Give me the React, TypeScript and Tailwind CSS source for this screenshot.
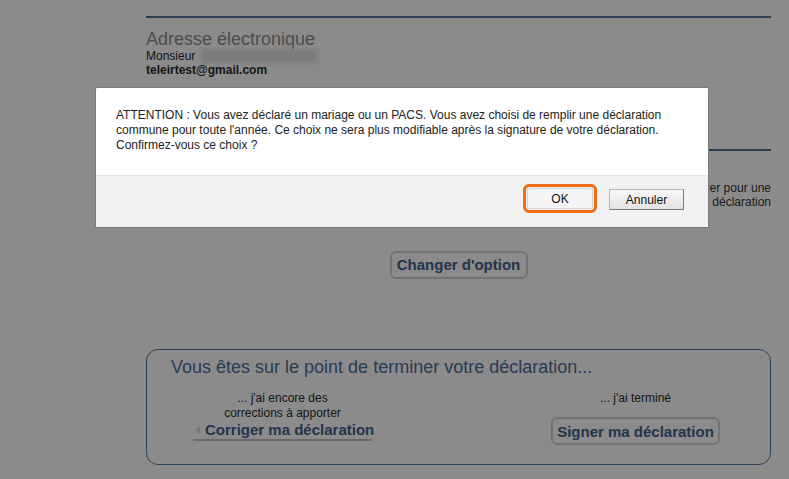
import * as React from "react";

export default function App() {
    return (
        <div className="relative min-h-[479px] overflow-hidden bg-white font-['Liberation_Sans',Arial,sans-serif] text-[#333]">
            <div className="ml-[146px] w-[625px] pt-[16px]">
                {/* Coordonnées */}
                <div className="h-[2px] bg-[#52779f]" />
                <h3 className="mt-[11px] text-[18px] leading-[20px] text-[#8e8e8e]">Adresse électronique</h3>
                <div className="flex items-center text-[12px] leading-[14px] text-[#2a2a2a]">
                    <span>Monsieur</span>
                    <span className="ml-[6px] h-[14px] w-[116px] bg-[#e2e2e2] blur-[2px]" />
                </div>
                <div className="text-[12px] font-bold leading-[14px] text-[#2a2a2a]">teleirtest@gmail.com</div>

                {/* Option de déclaration (sous la boîte de dialogue) */}
                <h3 className="mt-[46px] text-[18px] leading-[20px] text-[#8e8e8e]">Type de déclaration</h3>
                <div className="mt-[6px] h-[2px] bg-[#52779f]" />
                <p className="mt-[30px] text-right text-[12px] leading-[14px] text-[#333]">
                    Vous avez choisi une déclaration commune. Vous pouvez changer d'option et choisir de déclarer pour une
                    <br />
                    déclaration séparée jusqu'à la signature de votre déclaration
                </p>
                <div className="mt-[42px] flex justify-center">
                    <button className="h-[28px] w-[138px] rounded-[6px] border-2 border-[#d2d2d2] bg-white text-[15px] font-bold whitespace-nowrap text-[#41618a]">
                        Changer d'option
                    </button>
                </div>

                {/* Fin de déclaration */}
                <div className="mt-[70px] rounded-[12px] border border-[#52779f] pt-[7px] pb-[19px]">
                    <h2 className="pl-[24px] text-[18px] leading-[20px] text-[#4c6f98]">
                        Vous êtes sur le point de terminer votre déclaration...
                    </h2>
                    <div className="mt-[14px] flex justify-between pl-[46px] pr-[50px]">
                        <div className="flex w-[179px] flex-col items-center text-center text-[12px] leading-[15px] text-[#2a2a2a]">
                            <span>... j'ai encore des</span>
                            <span>corrections à apporter</span>
                            <a className="flex h-[20px] w-[179px] items-center gap-[5px] border-b-2 border-[#c3c3c3] pl-[2px] text-[15px] leading-[18px] font-bold whitespace-nowrap text-[#41618a]">
                                <span className="h-0 w-0 border-y-[4px] border-r-[5px] border-y-transparent border-r-[#d8d8d8]" />
                                Corriger ma déclaration
                            </a>
                        </div>
                        <div className="flex w-[169px] flex-col items-center text-[12px] leading-[15px] text-[#2a2a2a]">
                            <span>... j'ai terminé</span>
                            <button className="mt-[11px] h-[28px] w-[169px] rounded-[6px] border-2 border-[#d2d2d2] bg-white text-[15px] font-bold whitespace-nowrap text-[#41618a]">
                                Signer ma déclaration
                            </button>
                        </div>
                    </div>
                </div>
            </div>

            {/* Fond de la boîte de dialogue */}
            <div className="fixed inset-0 bg-[rgba(0,0,0,0.455)]" />

            {/* Boîte de dialogue */}
            <div
                role="dialog"
                className="fixed left-[95px] top-[87px] w-[614px] overflow-hidden rounded-[2px] border border-[#7a7a7a] bg-white"
            >
                <div className="px-[20px] pt-[20px] pb-[22px] text-[12px] leading-[15px] whitespace-nowrap text-[#222]">
                    ATTENTION : Vous avez déclaré un mariage ou un PACS. Vous avez choisi de remplir une déclaration
                    <br />
                    commune pour toute l'année. Ce choix ne sera plus modifiable après la signature de votre déclaration.
                    <br />
                    Confirmez-vous ce choix ?
                </div>
                <div className="flex h-[52px] items-start justify-end gap-[16px] border-t border-[#e5e5e5] bg-[#f2f2f2] pt-[12px] pr-[24px]">
                    <button className="h-[21px] w-[66px] rounded-[2px] border border-[#d4d4d4] bg-[#f5f5f5] text-[12px] text-[#111] outline-[3px] outline-offset-1 outline-[#f26b10] outline-solid">
                        OK
                    </button>
                    <button className="mt-[1px] h-[21px] w-[75px] border border-[#b5b5b5] border-r-[#7a7a7a] border-b-[#7a7a7a] bg-linear-to-b from-[#f8f8f8] to-[#e2e2e2] text-[12px] text-[#111]">
                        Annuler
                    </button>
                </div>
            </div>
        </div>
    );
}
